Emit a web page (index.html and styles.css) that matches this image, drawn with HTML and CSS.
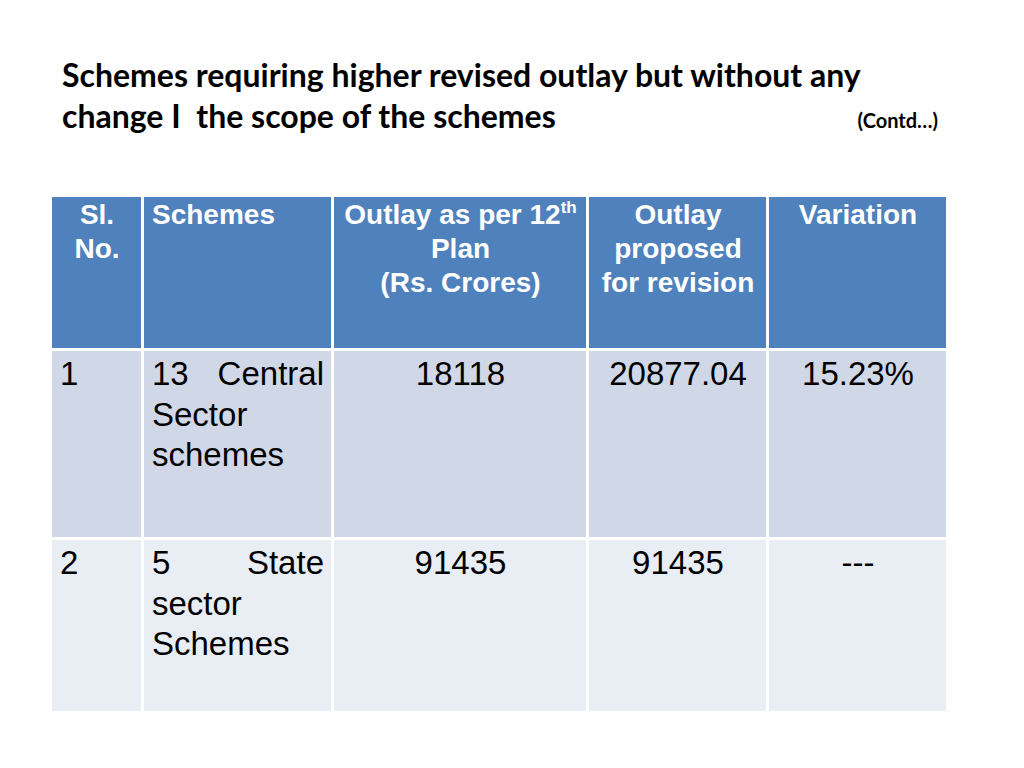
FILE: index.html
```html
<!DOCTYPE html>
<html>
<head>
<meta charset="utf-8">
<link rel="stylesheet" href="styles.css">
</head>
<body>
<div class="slide">
  <div class="title">
    <div class="line">Schemes requiring higher revised outlay but without any</div>
    <div class="line line2"><span>change I&nbsp; the scope of the schemes</span><span class="contd">(Contd…)</span></div>
  </div>
  <table class="grid">
    <colgroup>
      <col class="c1"><col class="c2"><col class="c3"><col class="c4"><col class="c5">
    </colgroup>
    <thead>
      <tr>
        <th class="center">Sl.<br>No.</th>
        <th class="left">Schemes</th>
        <th class="center">Outlay as per 12<sup>th</sup><br>Plan<br>(Rs. Crores)</th>
        <th class="center">Outlay<br>proposed<br>for revision</th>
        <th class="center">Variation</th>
      </tr>
    </thead>
    <tbody>
      <tr class="r1">
        <td class="left">1</td>
        <td class="just">13 Central Sector schemes</td>
        <td class="center">18118</td>
        <td class="center">20877.04</td>
        <td class="center">15.23%</td>
      </tr>
      <tr class="r2">
        <td class="left">2</td>
        <td class="just">5 State sector Schemes</td>
        <td class="center">91435</td>
        <td class="center">91435</td>
        <td class="center">---</td>
      </tr>
    </tbody>
  </table>
</div>
</body>
</html>
```
FILE: styles.css
```css
html, body {
  margin: 0;
  padding: 0;
  background: #ffffff;
}
.slide {
  width: 1024px;
  height: 768px;
  padding-top: 54px;
  box-sizing: border-box;
}
.title {
  padding-left: 62px;
  width: 876px;
  font-family: "Lato", "Open Sans", sans-serif;
  font-weight: 700;
  font-size: 32px;
  line-height: 41px;
  color: #000;
}
.line2 {
  display: flex;
  justify-content: space-between;
  align-items: baseline;
}
.contd {
  font-size: 20px;
}
.grid {
  margin-top: 53px;
  margin-left: 49px;
  border-collapse: collapse;
  table-layout: fixed;
  width: 900px;
  font-family: "Liberation Sans", Arial, sans-serif;
}
.c1 { width: 92px; }
.c2 { width: 190px; }
.c3 { width: 255px; }
.c4 { width: 180px; }
.c5 { width: 180px; }
.grid th, .grid td {
  border: 3px solid #ffffff;
  vertical-align: top;
}
.grid th {
  background: #4f81bd;
  color: #ffffff;
  font-weight: 700;
  font-size: 28px;
  line-height: 34px;
  height: 154px;
  padding: 1px 7px 0 8px;
  box-sizing: border-box;
}
.grid th sup {
  font-size: 17px;
  line-height: 0;
  vertical-align: 11px;
}
.grid td {
  color: #000;
  font-size: 33px;
  line-height: 40.5px;
  padding: 3px 7px 0 8px;
  box-sizing: border-box;
}
.r1 td { background: #d0d8e8; height: 189px; }
.r2 td { background: #e9edf4; height: 174px; }
.left { text-align: left; }
.center { text-align: center; }
.just { text-align: justify; }
```
